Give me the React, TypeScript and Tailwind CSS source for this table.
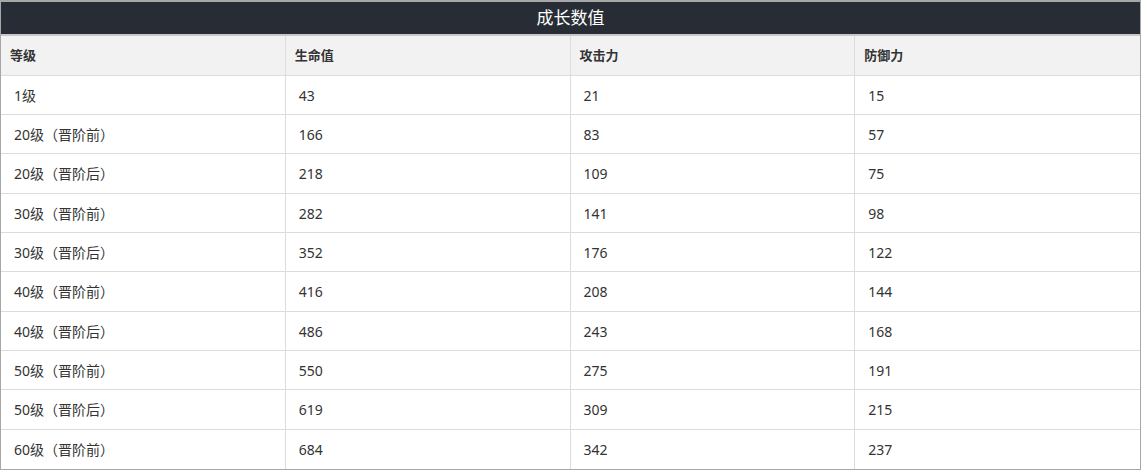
const rows: [string, number, number, number, number][] = [
  ["1级", 43, 21, 15, 39],
  ["20级（晋阶前）", 166, 83, 57, 39],
  ["20级（晋阶后）", 218, 109, 75, 40],
  ["30级（晋阶前）", 282, 141, 98, 39],
  ["30级（晋阶后）", 352, 176, 122, 39],
  ["40级（晋阶前）", 416, 208, 144, 40],
  ["40级（晋阶后）", 486, 243, 168, 39],
  ["50级（晋阶前）", 550, 275, 191, 39],
  ["50级（晋阶后）", 619, 309, 215, 40],
  ["60级（晋阶前）", 684, 342, 237, 39],
]

const font = { fontFamily: '"Noto Sans", "Noto Sans CJK SC", sans-serif' }

export default function App() {
  return (
    <div className="w-[1142px] h-[471px] bg-white" style={font}>
      <div className="w-[1141px] border border-[#a7a7a7] border-t-2">
        {/* Title */}
        <div className="h-[34px] bg-[#282c34] flex items-center justify-center text-white text-[17px] font-normal border-b-2 border-[#c8c8c8]">
          成长数值
        </div>

        {/* Header row */}
        <div className="grid grid-cols-4 h-[40px] bg-[#f2f2f2] border-b border-[#dcdcdc] text-[13px] font-bold text-[#333]">
          {["等级", "生命值", "攻击力", "防御力"].map((h, i) => (
            <div key={h} className={`flex items-center pl-[9px] ${i < 3 ? "border-r border-[#dcdcdc]" : ""}`}>
              {h}
            </div>
          ))}
        </div>

        {/* Data rows */}
        {rows.map(([level, hp, atk, def, h], r) => (
          <div
            key={level}
            className={`grid grid-cols-4 text-[14px] text-[#333] ${r < rows.length - 1 ? "border-b border-[#dcdcdc]" : ""} ${h === 40 ? "h-[40px]" : "h-[39px]"}`}
          >
            {[level, hp, atk, def].map((v, i) => (
              <div key={i} className={`flex items-center pl-[13px] ${i < 3 ? "border-r border-[#dcdcdc]" : ""}`}>
                {v}
              </div>
            ))}
          </div>
        ))}
      </div>
    </div>
  )
}
